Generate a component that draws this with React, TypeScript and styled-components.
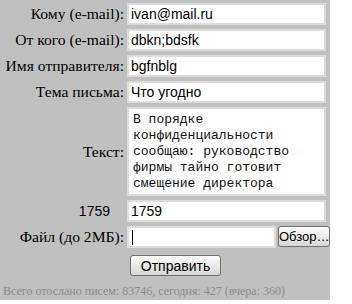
import React from 'react';
import styled, {createGlobalStyle} from 'styled-components';

const GlobalStyle = createGlobalStyle`
body {
    margin: 0;
    background: #fff;
}
`

const Panel = styled.form`
width: 330px;
height: 300px;
box-sizing: border-box;
background: #c0c0c0;
padding: 3px 4px 0 0;
display: grid;
grid-template-columns: 124px 199px;
column-gap: 3px;
row-gap: 4px;
align-content: start;
align-items: center;
`

const Label = styled.label<{$sans?: boolean; $inset?: number}>`
text-align: right;
font-family: ${p => p.$sans ? '"Liberation Sans", Arial, sans-serif' : '"Liberation Serif", "Times New Roman", serif'};
font-size: ${p => p.$sans ? '14px' : '15.6px'};
color: #000;
white-space: nowrap;
padding-right: ${p => p.$inset ?? 0}px;
`

const Field = styled.input`
box-sizing: border-box;
width: 100%;
height: 22px;
margin: 0;
padding: 0 2px;
border: 2px solid #dcdcdc;
background: #fff;
font-family: "Liberation Sans", Arial, sans-serif;
font-size: 14px;
color: #000;
outline: none;
`

const Message = styled.textarea`
box-sizing: border-box;
width: 100%;
height: 89px;
margin: 0;
padding: 3px 4px;
border: 2px solid #dcdcdc;
background: #fff;
font-family: "Liberation Mono", "Courier New", monospace;
font-size: 13px;
line-height: 16px;
color: #111;
resize: none;
overflow: hidden;
outline: none;
`

const FileRow = styled.div`
display: flex;
gap: 2px;
width: 203px;
`

const FileBox = styled.div`
box-sizing: border-box;
width: 149px;
height: 22px;
border: 2px solid #dcdcdc;
background: #fff;
display: flex;
align-items: center;
padding-left: 3px;
`

const Caret = styled.span`
display: block;
width: 1px;
height: 15px;
background: #000;
`

const Button = styled.button<{$w: number; $small?: boolean}>`
box-sizing: border-box;
width: ${p => p.$w}px;
height: 21px;
margin: 0;
padding: 0;
border: 1px solid #707070;
border-radius: 3px;
background: linear-gradient(#fdfdfd, #e6e6e6 60%, #d6d6d6);
font-family: "Liberation Sans", Arial, sans-serif;
font-size: ${p => p.$small ? '13px' : '14px'};
color: #000;
white-space: nowrap;
overflow: hidden;
`

const Submit = styled.div`
grid-column: 2;
padding: 3px 0 0 3px;
`

const Footer = styled.div`
grid-column: 1 / span 2;
padding: 4px 0 0 3px;
font-family: "Liberation Serif", "Times New Roman", serif;
font-size: 12px;
color: #8c8c8c;
white-space: nowrap;
`

const rows = [
    {label: 'Кому (e-mail):', value: 'ivan@mail.ru'},
    {label: 'От кого (e-mail):', value: 'dbkn;bdsfk'},
    {label: 'Имя отправителя:', value: 'bgfnblg'},
    {label: 'Тема письма:', value: 'Что угодно'},
]

const App: React.FC = () => {
    return (
        <>
            <GlobalStyle/>
            <Panel onSubmit={(e) => e.preventDefault()}>
                {rows.map(r => (
                    <React.Fragment key={r.label}>
                        <Label>{r.label}</Label>
                        <Field type="text" defaultValue={r.value}/>
                    </React.Fragment>
                ))}
                <Label>Текст:</Label>
                <Message defaultValue="В порядке конфиденциальности сообщаю: руководство фирмы тайно готовит смещение директора"/>
                <Label $sans $inset={14}>1759</Label>
                <Field type="text" defaultValue="1759"/>
                <Label>Файл (до 2МБ):</Label>
                <FileRow>
                    <FileBox><Caret/></FileBox>
                    <Button type="button" $w={52} $small>Обзор…</Button>
                </FileRow>
                <Submit>
                    <Button type="submit" $w={91}>Отправить</Button>
                </Submit>
                <Footer>Всего отослано писем: 83746, сегодня: 427 (вчера: 360)</Footer>
            </Panel>
        </>
    )
};

export default App;
